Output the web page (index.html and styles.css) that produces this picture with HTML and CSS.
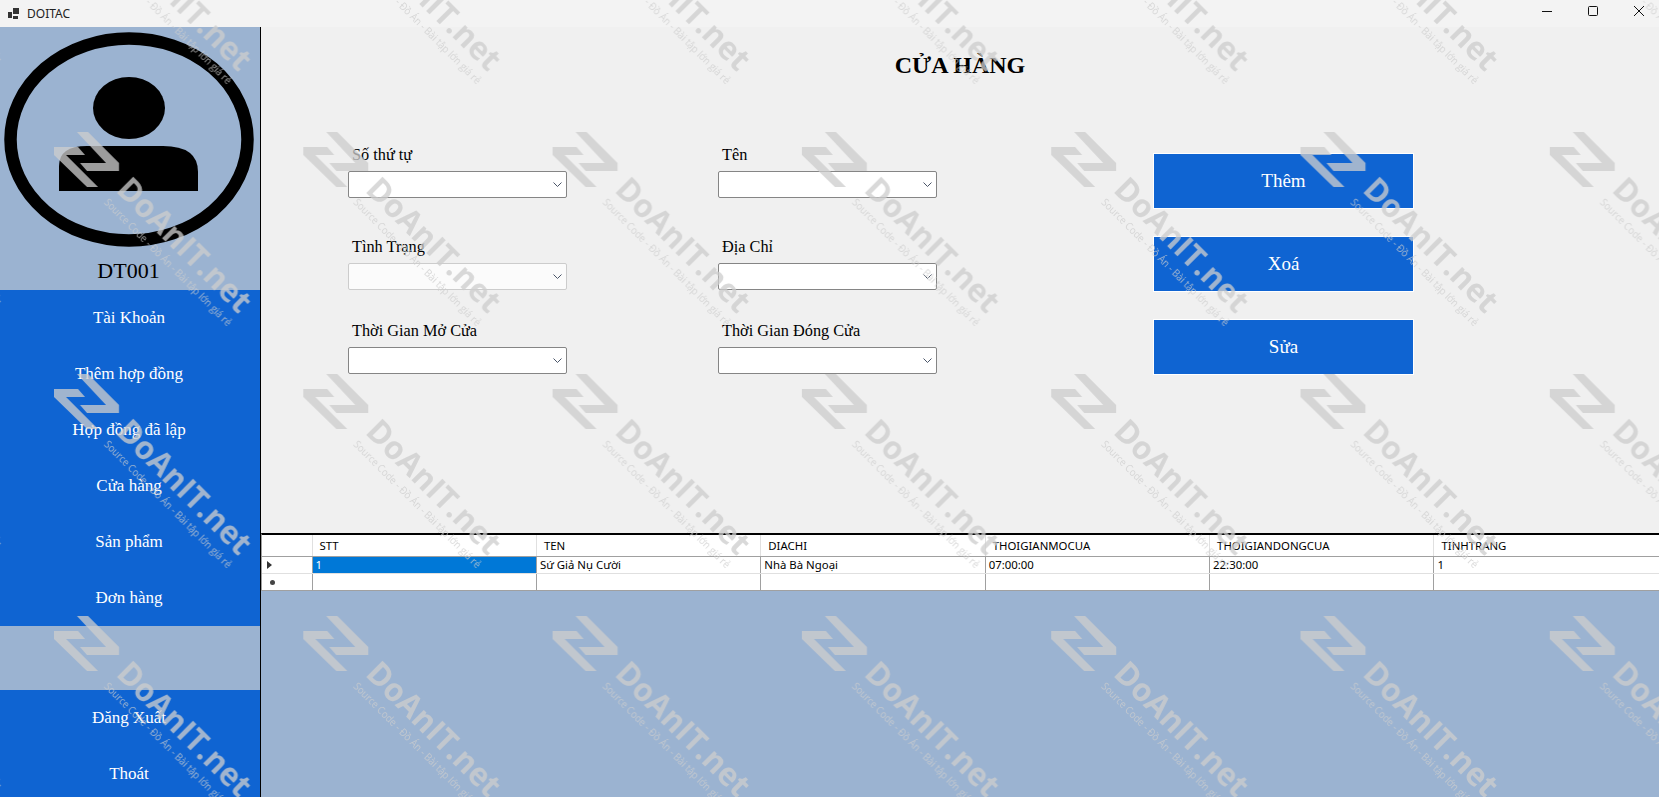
FILE: index.html
```html
<!DOCTYPE html>
<html lang="vi">
<head>
    <meta charset="UTF-8">
    <title>DOITAC</title>
    <link rel="stylesheet" href="styles.css">
</head>
<body>
    <header class="titlebar">
        <div class="app-title">
            <svg class="app-icon" width="12" height="12" viewBox="0 0 12 12"><rect x="0" y="4" width="4" height="6"/><rect x="5" y="0" width="6" height="6"/><rect x="5" y="8" width="5" height="3"/></svg>
            <span>DOITAC</span>
        </div>
        <div class="win-buttons">
            <svg width="46" height="27" viewBox="0 0 46 27"><path d="M18 11.500H28"/></svg>
            <svg width="46" height="27" viewBox="0 0 46 27"><rect x="18.500" y="6.500" width="9" height="9" rx="1"/></svg>
            <svg width="46" height="27" viewBox="0 0 46 27"><path d="M18 6L28 16M28 6L18 16"/></svg>
        </div>
    </header>

    <div class="window">
        <aside class="sidebar">
            <div class="profile">
                <svg class="avatar" width="260" height="223" viewBox="0 27 260 223">
                    <ellipse class="avatar-ring" cx="129" cy="139.500" rx="118.500" ry="101"/>
                    <ellipse cx="129" cy="108" rx="36" ry="31"/>
                    <path d="M59 191V166Q59 146 87 146H163Q198 146 198 172V191Z"/>
                </svg>
                <div class="profile-name">DT001</div>
            </div>
            <nav class="menu">
                <a href="#">Tài Khoản</a>
                <a href="#">Thêm hợp đồng</a>
                <a href="#">Hợp đồng đã lập</a>
                <a href="#">Cửa hàng</a>
                <a href="#">Sản phẩm</a>
                <a href="#">Đơn hàng</a>
            </nav>
            <div class="menu-gap"></div>
            <nav class="menu">
                <a href="#">Đăng Xuất</a>
                <a href="#">Thoát</a>
            </nav>
        </aside>

        <main class="content">
            <section class="panel">
                <h1>CỬA HÀNG</h1>
                <div class="form-area">
                    <div class="fields">
                        <div class="field">
                            <label>Số thứ tự</label>
                            <div class="combo"><svg width="9" height="6" viewBox="0 0 9 6"><path d="M0.500 0.500L4.500 4.500L8.500 0.500"/></svg></div>
                        </div>
                        <div class="field">
                            <label>Tên</label>
                            <div class="combo"><svg width="9" height="6" viewBox="0 0 9 6"><path d="M0.500 0.500L4.500 4.500L8.500 0.500"/></svg></div>
                        </div>
                        <div class="field">
                            <label>Tình Trạng</label>
                            <div class="combo combo-disabled"><svg width="9" height="6" viewBox="0 0 9 6"><path d="M0.500 0.500L4.500 4.500L8.500 0.500"/></svg></div>
                        </div>
                        <div class="field">
                            <label>Địa Chỉ</label>
                            <div class="combo"><svg width="9" height="6" viewBox="0 0 9 6"><path d="M0.500 0.500L4.500 4.500L8.500 0.500"/></svg></div>
                        </div>
                        <div class="field">
                            <label>Thời Gian Mở Cửa</label>
                            <div class="combo"><svg width="9" height="6" viewBox="0 0 9 6"><path d="M0.500 0.500L4.500 4.500L8.500 0.500"/></svg></div>
                        </div>
                        <div class="field">
                            <label>Thời Gian Đóng Cửa</label>
                            <div class="combo"><svg width="9" height="6" viewBox="0 0 9 6"><path d="M0.500 0.500L4.500 4.500L8.500 0.500"/></svg></div>
                        </div>
                    </div>
                    <div class="actions">
                        <button>Thêm</button>
                        <button>Xoá</button>
                        <button>Sửa</button>
                    </div>
                </div>
            </section>

            <div class="grid-wrap">
                <table class="grid">
                    <colgroup>
                        <col class="col-head">
                        <col class="col-data"><col class="col-data"><col class="col-data"><col class="col-data"><col class="col-data"><col>
                    </colgroup>
                    <thead>
                        <tr>
                            <th></th>
                            <th>STT</th>
                            <th>TEN</th>
                            <th>DIACHI</th>
                            <th>THOIGIANMOCUA</th>
                            <th>THOIGIANDONGCUA</th>
                            <th>TINHTRANG</th>
                        </tr>
                    </thead>
                    <tbody>
                        <tr>
                            <td class="row-head"><span class="row-arrow"></span></td>
                            <td class="selected">1</td>
                            <td>Sứ Giả Nụ Cười</td>
                            <td>Nhà Bà Ngoại</td>
                            <td>07:00:00</td>
                            <td>22:30:00</td>
                            <td>1</td>
                        </tr>
                        <tr>
                            <td class="row-head"><span class="row-new"></span></td>
                            <td></td><td></td><td></td><td></td><td></td><td></td>
                        </tr>
                    </tbody>
                </table>
            </div>
            <div class="grid-empty"></div>
        </main>
    </div>

    <!-- watermark on top of the whole screenshot -->
    <svg class="watermark" width="1659" height="797">
        <defs>
            <pattern id="wm" width="249.300" height="242" patternUnits="userSpaceOnUse" patternTransform="translate(54 -111)">
                <path d="M22 0H33L65 32V40H33L26 32H52Z"/>
                <path d="M0 16H24L31 24H12L44 56H33L0 24Z"/>
                <text class="wm-big" transform="translate(61 60) rotate(45)" textLength="175" lengthAdjust="spacingAndGlyphs">DoAnIT.net</text>
                <text class="wm-small" transform="translate(49.500 72) rotate(45)" textLength="175" lengthAdjust="spacingAndGlyphs">Source Code - Đồ Án - Bài tập lớn giá rẻ</text>
            </pattern>
        </defs>
        <rect width="1659" height="797" fill="url(#wm)"/>
    </svg>
</body>
</html>
```

FILE: styles.css
```css
html, body {
    margin: 0;
    padding: 0;
    height: 100%;
    overflow: hidden;
    font-family: "Liberation Serif", serif;
    background-color: #f0f0f0;
}
body {
    display: flex;
    flex-direction: column;
}

/* title bar */
.titlebar {
    height: 27px;
    flex: none;
    background-color: #f3f3f3;
    display: flex;
    justify-content: space-between;
    align-items: center;
}
.app-title {
    display: flex;
    align-items: center;
    padding-left: 8px;
    gap: 7px;
    font-family: "Noto Sans", sans-serif;
    font-size: 12px;
    color: #222;
}
.app-icon {
    fill: #333;
}
.win-buttons {
    display: flex;
    margin-right: -3px;
}
.win-buttons svg {
    fill: none;
    stroke: #111;
    stroke-width: 1;
}

.window {
    flex: 1;
    display: flex;
    min-height: 0;
}

/* sidebar */
.sidebar {
    width: 260px;
    flex: none;
    display: flex;
    flex-direction: column;
    background-color: #9bb3d1;
}
.profile {
    height: 263px;
    flex: none;
    text-align: center;
}
.avatar {
    display: block;
}
.avatar-ring {
    fill: none;
    stroke: #000;
    stroke-width: 12.500;
}
.profile-name {
    font-size: 22px;
    line-height: 26px;
    margin-top: 8px;
    padding-right: 3px;
    color: #000;
}
.menu {
    flex: none;
    background-color: #0f64d2;
    display: flex;
    flex-direction: column;
}
.menu a {
    height: 56px;
    padding-right: 2px;
    display: flex;
    align-items: center;
    justify-content: center;
    color: white;
    text-decoration: none;
    font-size: 17px;
}
.menu-gap {
    height: 64px;
    flex: none;
}

/* main area */
.content {
    flex: 1;
    display: flex;
    flex-direction: column;
    border-left: 1px solid #000;
    min-width: 0;
}
.panel {
    height: 506px;
    flex: none;
}
h1 {
    margin: 19px 0 0;
    height: 38px;
    line-height: 38px;
    text-align: center;
    font-size: 24px;
    color: #000;
}
.form-area {
    display: flex;
    margin-top: 59px;
    padding-left: 87px;
}
.fields {
    display: grid;
    grid-template-columns: 219px 219px;
    grid-template-rows: 92px 84px 55px;
    column-gap: 151px;
}
.field label {
    display: block;
    height: 22px;
    line-height: 24px;
    margin: 0 0 6px 4px;
    font-size: 16.300px;
    color: #000;
}
.combo {
    box-sizing: border-box;
    height: 27px;
    background-color: white;
    border: 1px solid #858585;
    border-radius: 2px;
    display: flex;
    align-items: center;
    justify-content: flex-end;
    padding-right: 4px;
}
.combo svg {
    fill: none;
    stroke: #4a5568;
    stroke-width: 1;
}
.combo-disabled {
    background-color: #fbfbfb;
    border-color: #cccccc;
}
.actions {
    margin: 10px 0 0 216px;
    display: flex;
    flex-direction: column;
    gap: 27px;
}
.actions button {
    width: 261px;
    height: 56px;
    background-color: #0f64d2;
    color: white;
    border: 1px solid white;
    font-family: inherit;
    font-size: 19px;
    padding: 0;
}

/* data grid */
.grid-wrap {
    flex: none;
    border-top: 2px solid #000;
    border-left: 1px solid #a0a0a0;
    background-color: white;
}
.grid {
    width: 100%;
    table-layout: fixed;
    border-collapse: collapse;
    font-family: "Noto Sans", sans-serif;
    font-size: 11.400px;
    color: #000;
}
.col-head {
    width: 50px;
}
.col-data {
    width: 224.400px;
}
.grid th {
    height: 21px;
    padding: 0 0 0 7px;
    font-weight: normal;
    text-align: left;
    border-right: 1px solid #e0e0e0;
    border-bottom: 1px solid #a0a0a0;
}
.grid td {
    height: 16px;
    padding: 0 0 0 3px;
    line-height: 16px;
    border-right: 1px solid #a0a0a0;
    border-bottom: 1px solid #a0a0a0;
}
.grid th:last-child, .grid td:last-child {
    border-right: none;
}
.grid tbody tr:first-child td {
    border-bottom-color: #e0e0e0;
}
.grid td.selected {
    background-color: #0078d7;
    color: white;
}
.row-arrow {
    display: block;
    width: 0;
    height: 0;
    margin-left: 2px;
    border-left: 5px solid #333;
    border-top: 4px solid transparent;
    border-bottom: 4px solid transparent;
}
.row-new {
    display: block;
    width: 5px;
    height: 5px;
    margin-left: 5px;
    border-radius: 50%;
    background-color: #444;
}
.grid-empty {
    flex: 1;
    background-color: #9bb3d1;
}

/* watermark */
.watermark {
    position: absolute;
    left: 0;
    top: 0;
    pointer-events: none;
}
.watermark path, .watermark text {
    fill: rgba(205, 205, 205, 0.76);
}
.wm-big {
    font-family: "Open Sans", sans-serif;
    font-weight: 700;
    font-size: 32px;
}
.wm-small {
    font-family: "Open Sans", sans-serif;
    font-size: 10.500px;
}
```
